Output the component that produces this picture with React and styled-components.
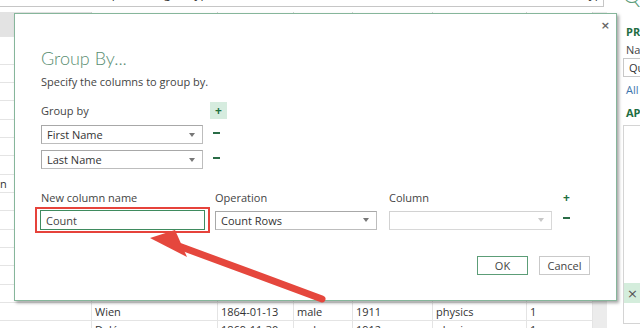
import React from 'react';
import styled, { createGlobalStyle } from 'styled-components';

const Global = createGlobalStyle`
  html, body { margin: 0; padding: 0; background: #fff; }
  body { font-family: "Open Sans", "Noto Sans", sans-serif; font-size: 11px; color: #444; }
  #root { width: 640px; height: 328px; overflow: hidden; }
`;

const Screen = styled.div`
  position: relative;
  width: 640px;
  height: 328px;
  overflow: hidden;
  display: grid;
  grid-template-columns: 623px 1fr;
`;

const Main = styled.div`
  display: flex;
  flex-direction: column;
  min-width: 0;
  overflow: hidden;
`;

const FormulaBar = styled.div`
  box-sizing: border-box;
  width: 604px;
  height: 7px;
  border-right: 1px solid #c6c6c6;
  border-bottom: 1px solid #c6c6c6;
  overflow: hidden;
  flex: none;
`;

const FormulaText = styled.div`
  margin-top: -13px;
  padding-left: 40px;
  font-size: 12px;
  line-height: 14px;
  color: #333;
  white-space: nowrap;
`;

const Table = styled.div`
  margin-top: 5px;
  display: flex;
  flex-direction: column;
`;

const Row = styled.div`
  display: grid;
  grid-template-columns: 92px 126px 76px 59px 80px 94px 66px 14px;
  height: ${(p) => p.$h}px;
  flex: none;
`;

const Cell = styled.div`
  box-sizing: border-box;
  border-right: 1px solid ${(p) => (p.$head ? '#d6d6d6' : '#e4e4e4')};
  border-bottom: 1px solid #e4e4e4;
  padding: 0 3px;
  display: flex;
  align-items: center;
  font-size: 11px;
  color: #333;
  white-space: nowrap;
  overflow: hidden;
  background: ${(p) => (p.$grey ? '#e3e3e3' : '#fff')};
  &:last-child {
    background: #ececec;
    border-right: none;
    border-bottom: none;
  }
`;

const EdgeText = styled.span`
  margin-left: -3px;
`;

const Panel = styled.div`
  display: flex;
  flex-direction: column;
  overflow: hidden;
`;

const PanelTitle = styled.div`
  margin-top: -18px;
  font-family: Lato, "Open Sans", sans-serif;
  font-weight: 300;
  font-size: 22px;
  line-height: 26px;
  color: #5c9c7a;
  white-space: nowrap;
`;

const PanelHeading = styled.div`
  margin-top: ${(p) => p.$mt}px;
  padding-left: 3px;
  font-weight: 700;
  font-size: 11px;
  line-height: 14px;
  color: #1f6e43;
  white-space: nowrap;
`;

const PanelText = styled.div`
  margin-top: ${(p) => p.$mt}px;
  padding-left: 3px;
  font-size: 11px;
  line-height: 14px;
  color: ${(p) => (p.$link ? '#3d76ad' : '#444')};
  white-space: nowrap;
`;

const PanelInput = styled.div`
  box-sizing: border-box;
  margin-top: 1px;
  height: 19px;
  width: 200px;
  border: 1px solid #c8c8c8;
  padding-left: 5px;
  display: flex;
  align-items: center;
  font-size: 11px;
  color: #333;
  white-space: nowrap;
`;

const StepsBox = styled.div`
  box-sizing: border-box;
  margin-top: 5px;
  width: 200px;
  height: 199px;
  border: 1px solid #d4d4d4;
  display: flex;
  flex-direction: column;
  justify-content: flex-end;
  padding-bottom: 20px;
`;

const StepRow = styled.div`
  height: 20px;
  background: #d4eddc;
  display: flex;
  align-items: center;
  padding-left: 3px;
  gap: 6px;
  font-size: 11px;
  color: #333;
  white-space: nowrap;
`;

const StepX = styled.span`
  font-family: "DejaVu Sans", sans-serif;
  font-size: 13px;
  line-height: 13px;
  color: #555;
`;

const Dialog = styled.div`
  position: absolute;
  left: 14px;
  top: 13px;
  width: 603px;
  height: 288px;
  box-sizing: border-box;
  background: #fff;
  border: 1px solid #86b69b;
  box-shadow: 2px 2px 3px rgba(0, 0, 0, 0.35);
  display: flex;
  flex-direction: column;
  padding: 0 0 0 26px;
`;

const CloseRow = styled.div`
  height: 22px;
  display: flex;
  justify-content: flex-end;
  align-items: center;
  padding-right: 6px;
`;

const Close = styled.span`
  font-family: "DejaVu Sans", sans-serif;
  font-size: 11px;
  font-weight: 700;
  line-height: 11px;
  color: #666;
`;

const Title = styled.div`
  margin-top: 10px;
  font-family: Lato, "Open Sans", sans-serif;
  font-weight: 300;
  font-size: 18px;
  line-height: 24px;
  color: #5b8e73;
`;

const Subtitle = styled.div`
  margin-top: 4px;
  line-height: 16px;
  color: #444;
`;

const GroupGrid = styled.div`
  margin-top: 12px;
  display: grid;
  grid-template-columns: 162px 17px;
  column-gap: 7px;
  grid-template-rows: 17px 19px 19px;
  row-gap: 6px;
  align-items: center;
`;

const Label = styled.div`
  line-height: 16px;
  color: #444;
  white-space: nowrap;
  align-self: ${(p) => p.$align || 'center'};
`;

const AddButton = styled.div`
  width: 17px;
  height: 17px;
  background: #d6ecdf;
  color: #21703f;
  font-weight: 700;
  font-size: 12px;
  line-height: 17px;
  text-align: center;
`;

const PlainPlus = styled.div`
  width: 7px;
  margin-left: 11px;
  color: #21703f;
  font-weight: 700;
  font-size: 12px;
  line-height: 16px;
  text-align: center;
`;

const Minus = styled.div`
  width: 7px;
  height: 2px;
  background: #2a6c47;
  justify-self: start;
  margin-left: ${(p) => p.$ml}px;
  margin-top: -4px;
`;

const Combo = styled.div`
  box-sizing: border-box;
  width: ${(p) => p.$w || 162}px;
  height: 19px;
  border: 1px solid ${(p) => (p.$disabled ? '#d8d8d8' : '#bdbdbd')};
  border-top-color: ${(p) => (p.$disabled ? '#d2d2d2' : '#a8a8a8')};
  border-left-color: ${(p) => (p.$disabled ? '#d2d2d2' : '#a8a8a8')};
  background: #fff;
  display: flex;
  align-items: center;
  justify-content: space-between;
  padding: 0 7px 0 5px;
  color: #333;
  white-space: nowrap;
`;

const Caret = styled.span`
  width: 0;
  height: 0;
  border-left: 3.5px solid transparent;
  border-right: 3.5px solid transparent;
  border-top: 4px solid ${(p) => (p.$disabled ? '#c8c8c8' : '#777')};
`;

const AggGrid = styled.div`
  margin-top: 21px;
  display: grid;
  grid-template-columns: 174px 174px 163px 22px;
  grid-template-rows: 16px 26px;
  row-gap: 1px;
  align-items: center;
`;

const Highlight = styled.div`
  box-sizing: border-box;
  width: 175px;
  height: 26px;
  margin-left: -6px;
  border: 2px solid #e6433b;
  padding: 1px 3px;
`;

const TextInput = styled.div`
  box-sizing: border-box;
  height: 20px;
  border: 1px solid #3f8b5f;
  padding-left: 5px;
  display: flex;
  align-items: center;
  color: #444;
`;

const Footer = styled.div`
  margin-top: 23px;
  display: flex;
  justify-content: flex-end;
  gap: 11px;
  padding-right: 26px;
`;

const Button = styled.div`
  box-sizing: border-box;
  width: 51px;
  height: 19px;
  border: 1px solid ${(p) => (p.$primary ? '#5c9d77' : '#c9c9c9')};
  display: flex;
  align-items: center;
  justify-content: center;
  color: #444;
  font-size: 11px;
`;

const Overlay = styled.svg`
  position: absolute;
  left: 0;
  top: 0;
  pointer-events: none;
`;

const COLS = 8;
const ROW_H = 18.33;

function TableRow({ h, cells = [], head }) {
  const all = Array.from({ length: COLS }, (_, i) => cells[i] || '');
  return (
    <Row $h={h}>
      {all.map((c, i) => (
        <Cell key={i} $head={head} $grey={head && i === 0}>
          {c}
        </Cell>
      ))}
    </Row>
  );
}

export default function App() {
  const rows = Array.from({ length: 15 }, (_, i) => {
    if (i === 6) return [<EdgeText key="n">n</EdgeText>];
    if (i === 13) return ['', 'Wien', '1864-01-13', 'male', '1911', 'physics', '1'];
    if (i === 14) return ['', 'Dalén', '1869-11-30', 'male', '1912', 'physics', '1'];
    return [];
  });

  return (
    <>
      <Global />
      <Screen>
        <Main>
          <FormulaBar>
            <FormulaText>
              = Table.Group(#"Changed Type", {"{"}"First Name", "Last Name"{"}"}, {"{{"}"Count", each Table.RowCount(_), type number{"}}"})
            </FormulaText>
          </FormulaBar>
          <Table>
            <TableRow h={25} head />
            <TableRow h={27.7} />
            {rows.map((r, i) => (
              <TableRow key={i} h={ROW_H} cells={r} />
            ))}
          </Table>
        </Main>
        <Panel>
          <PanelTitle>Query Settings</PanelTitle>
          <PanelHeading $mt={17}>PROPERTIES</PanelHeading>
          <PanelText $mt={4}>Name</PanelText>
          <PanelInput>Query1</PanelInput>
          <PanelText $mt={6} $link>All Properties</PanelText>
          <PanelHeading $mt={9}>APPLIED STEPS</PanelHeading>
          <StepsBox>
            <StepRow>
              <StepX>×</StepX>
              <span>Grouped Rows</span>
            </StepRow>
          </StepsBox>
        </Panel>

        <Dialog>
          <CloseRow>
            <Close>×</Close>
          </CloseRow>
          <Title>Group By...</Title>
          <Subtitle>Specify the columns to group by.</Subtitle>
          <GroupGrid>
            <Label $align="end">Group by</Label>
            <AddButton>+</AddButton>
            <Combo>
              First Name
              <Caret />
            </Combo>
            <Minus $ml={3} />
            <Combo>
              Last Name
              <Caret />
            </Combo>
            <Minus $ml={3} />
          </GroupGrid>
          <AggGrid>
            <Label>New column name</Label>
            <Label>Operation</Label>
            <Label>Column</Label>
            <PlainPlus>+</PlainPlus>
            <Highlight>
              <TextInput>Count</TextInput>
            </Highlight>
            <Combo>
              Count Rows
              <Caret />
            </Combo>
            <Combo $w={163} $disabled>
              <span />
              <Caret $disabled />
            </Combo>
            <Minus $ml={11} />
          </AggGrid>
          <Footer>
            <Button $primary>OK</Button>
            <Button>Cancel</Button>
          </Footer>
        </Dialog>

        <Overlay width="640" height="328" viewBox="0 0 640 328">
          <line x1="176" y1="245" x2="322" y2="299" stroke="#e5473d" strokeWidth="7" strokeLinecap="round" />
          <polygon points="150,238 175,230 187,257" fill="#e5473d" />
        </Overlay>
      </Screen>
    </>
  );
}
